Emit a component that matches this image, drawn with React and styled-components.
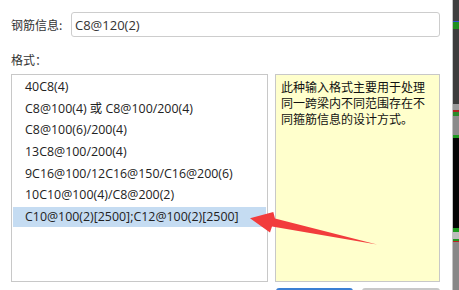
import React from "react";
import styled, { createGlobalStyle } from "styled-components";

const Global = createGlobalStyle`
  html, body { margin: 0; padding: 0; background: #ffffff; }
  body {
    width: 459px; height: 290px; overflow: hidden;
    font-family: "Open Sans", "Noto Sans CJK SC", sans-serif;
    color: #333;
  }
`;

const Page = styled.div`
  position: relative;
  display: flex;
  width: 459px;
  height: 290px;
  overflow: hidden;
`;

const Dialog = styled.div`
  flex: 0 0 452px;
  box-sizing: border-box;
  padding: 12px 12px 0 11px;
  display: flex;
  flex-direction: column;
  background: #fff;
  & > * { flex-shrink: 0; }
`;

const FieldRow = styled.div`
  display: flex;
  align-items: center;
  height: 25px;
`;

const Label = styled.span`
  width: 60px;
  font-size: 12px;
  color: #333;
  font-family: "Noto Sans CJK SC", sans-serif;
`;

const Input = styled.div`
  flex: 1;
  height: 25px;
  box-sizing: border-box;
  border: 1px solid #cdcdcd;
  border-radius: 3px;
  padding: 0 3px;
  display: flex;
  align-items: center;
  font-size: 13px;
  color: #333;
`;

const SectionLabel = styled.div`
  margin-top: 15px;
  height: 16px;
  line-height: 16px;
  font-size: 12px;
  color: #333;
  font-family: "Noto Sans CJK SC", sans-serif;
`;

const Body = styled.div`
  margin-top: 6px;
  display: flex;
  gap: 7px;
  height: 208px;
`;

const List = styled.div`
  width: 257px;
  box-sizing: border-box;
  border: 1px solid #c8c8c8;
  padding: 2px 1px;
  background: #fff;
`;

const Item = styled.div`
  height: 20px;
  margin-bottom: 1.7px;
  line-height: 20px;
  padding-left: 12px;
  font-size: 12.4px;
  color: #222;
  white-space: nowrap;
  background: ${(p) => (p.$selected ? "#c5dcf2" : "transparent")};
`;

const Note = styled.div`
  flex: 1;
  box-sizing: border-box;
  border: 1px solid #c8c8c8;
  background: #ffffcc;
  padding: 4px 5px;
  font-size: 12px;
  line-height: 16px;
  color: #111;
  font-family: "Noto Sans CJK SC", sans-serif;
`;

const Buttons = styled.div`
  margin-top: 6px;
  display: flex;
  justify-content: flex-end;
  gap: 9px;
`;

const Button = styled.div`
  width: ${(p) => p.$w}px;
  height: 24px;
  box-sizing: border-box;
  border: 1px solid ${(p) => (p.$primary ? "#3b7fd4" : "#c8c8c8")};
  border-top-width: 2px;
  border-radius: 3px;
  background: #f4f4f4;
`;

const Divider = styled.div`
  flex: 0 0 1px;
  background: #c4c4c4;
`;

const Strip = styled.div`
  flex: 1;
  display: flex;
  flex-direction: column;
`;

const Seg = styled.div`
  height: ${(p) => p.$h}px;
  background: ${(p) => p.$c};
  flex-shrink: 0;
`;

const Arrow = styled.svg`
  position: absolute;
  left: 0;
  top: 0;
  pointer-events: none;
`;

const items = [
  "40C8(4)",
  "C8@100(4) 或 C8@100/200(4)",
  "C8@100(6)/200(4)",
  "13C8@100/200(4)",
  "9C16@100/12C16@150/C16@200(6)",
  "10C10@100(4)/C8@200(2)",
  "C10@100(2)[2500];C12@100(2)[2500]",
];

const segs = [
  [21, "#404040"],
  [1, "#2b4fd8"],
  [7, "#1f8f1f"],
  [75, "#3c3c3c"],
  [6, "#9a9a9a"],
  [2, "#b02020"],
  [4, "#2a8a2a"],
  [19, "#8a8a8a"],
  [3, "#1f9a1f"],
  [90, "#050505"],
  [4, "#1f9a1f"],
  [7, "#bdbdbd"],
  [2, "#1f9a1f"],
  [1, "#c02020"],
  [48, "#888888"],
];

export default function App() {
  return (
    <>
      <Global />
      <Page>
        <Dialog>
          <FieldRow>
            <Label>钢筋信息:</Label>
            <Input>C8@120(2)</Input>
          </FieldRow>
          <SectionLabel>格式：</SectionLabel>
          <Body>
            <List>
              {items.map((t, i) => (
                <Item key={i} $selected={i === items.length - 1}>
                  {t}
                </Item>
              ))}
            </List>
            <Note>
              此种输入格式主要用于处理同一跨梁内不同范围存在不同箍筋信息的设计方式。
            </Note>
          </Body>
          <Buttons>
            <Button $primary $w={77} />
            <Button $w={78} />
          </Buttons>
        </Dialog>
        <Divider />
        <Strip>
          {segs.map(([h, c], i) => (
            <Seg key={i} $h={h} $c={c} />
          ))}
        </Strip>
        <Arrow width="459" height="290" viewBox="0 0 459 290">
          <polygon
            points="250,218.3 273.3,212 275,218.5 377,244.5 272,226.5 270,232.5"
            fill="#f23c3c"
          />
        </Arrow>
      </Page>
    </>
  );
}
